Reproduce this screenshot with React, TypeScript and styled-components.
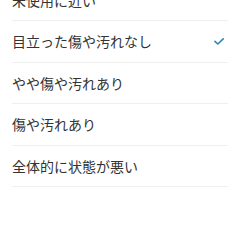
import React from "react";
import styled, { createGlobalStyle } from "styled-components";

const Global = createGlobalStyle`
  html, body { margin: 0; padding: 0; background: #fff; }
  body { font-family: "Noto Sans CJK JP", "Noto Sans", sans-serif; }
`;

const List = styled.ul`
  list-style: none;
  margin: -20.5px 0 0;
  padding: 0 12px;
`;

const Row = styled.li`
  box-sizing: border-box;
  height: 41.5px;
  display: flex;
  align-items: center;
  justify-content: space-between;
  border-bottom: 1px solid #efefef;
  color: #333;
  font-size: 14px;
  line-height: 1;
`;

const Label = styled.span`
  white-space: nowrap;
`;

const Check = styled.svg`
  width: 10px;
  height: 7px;
  margin-right: 4px;
  flex: none;
`;

const items = ["未使用に近い", "目立った傷や汚れなし", "やや傷や汚れあり", "傷や汚れあり", "全体的に状態が悪い"];
const selected = 1;

export default function App() {
  return (
    <>
      <Global />
      <List>
        {items.map((t, i) => (
          <Row key={t}>
            <Label>{t}</Label>
            {i === selected && (
              <Check viewBox="0 0 10 7">
                <path d="M1 3.4 L3.8 6 L9.2 0.8" fill="none" stroke="#2f86b4" strokeWidth="1.6" strokeLinecap="round" strokeLinejoin="round" />
              </Check>
            )}
          </Row>
        ))}
      </List>
    </>
  );
}
